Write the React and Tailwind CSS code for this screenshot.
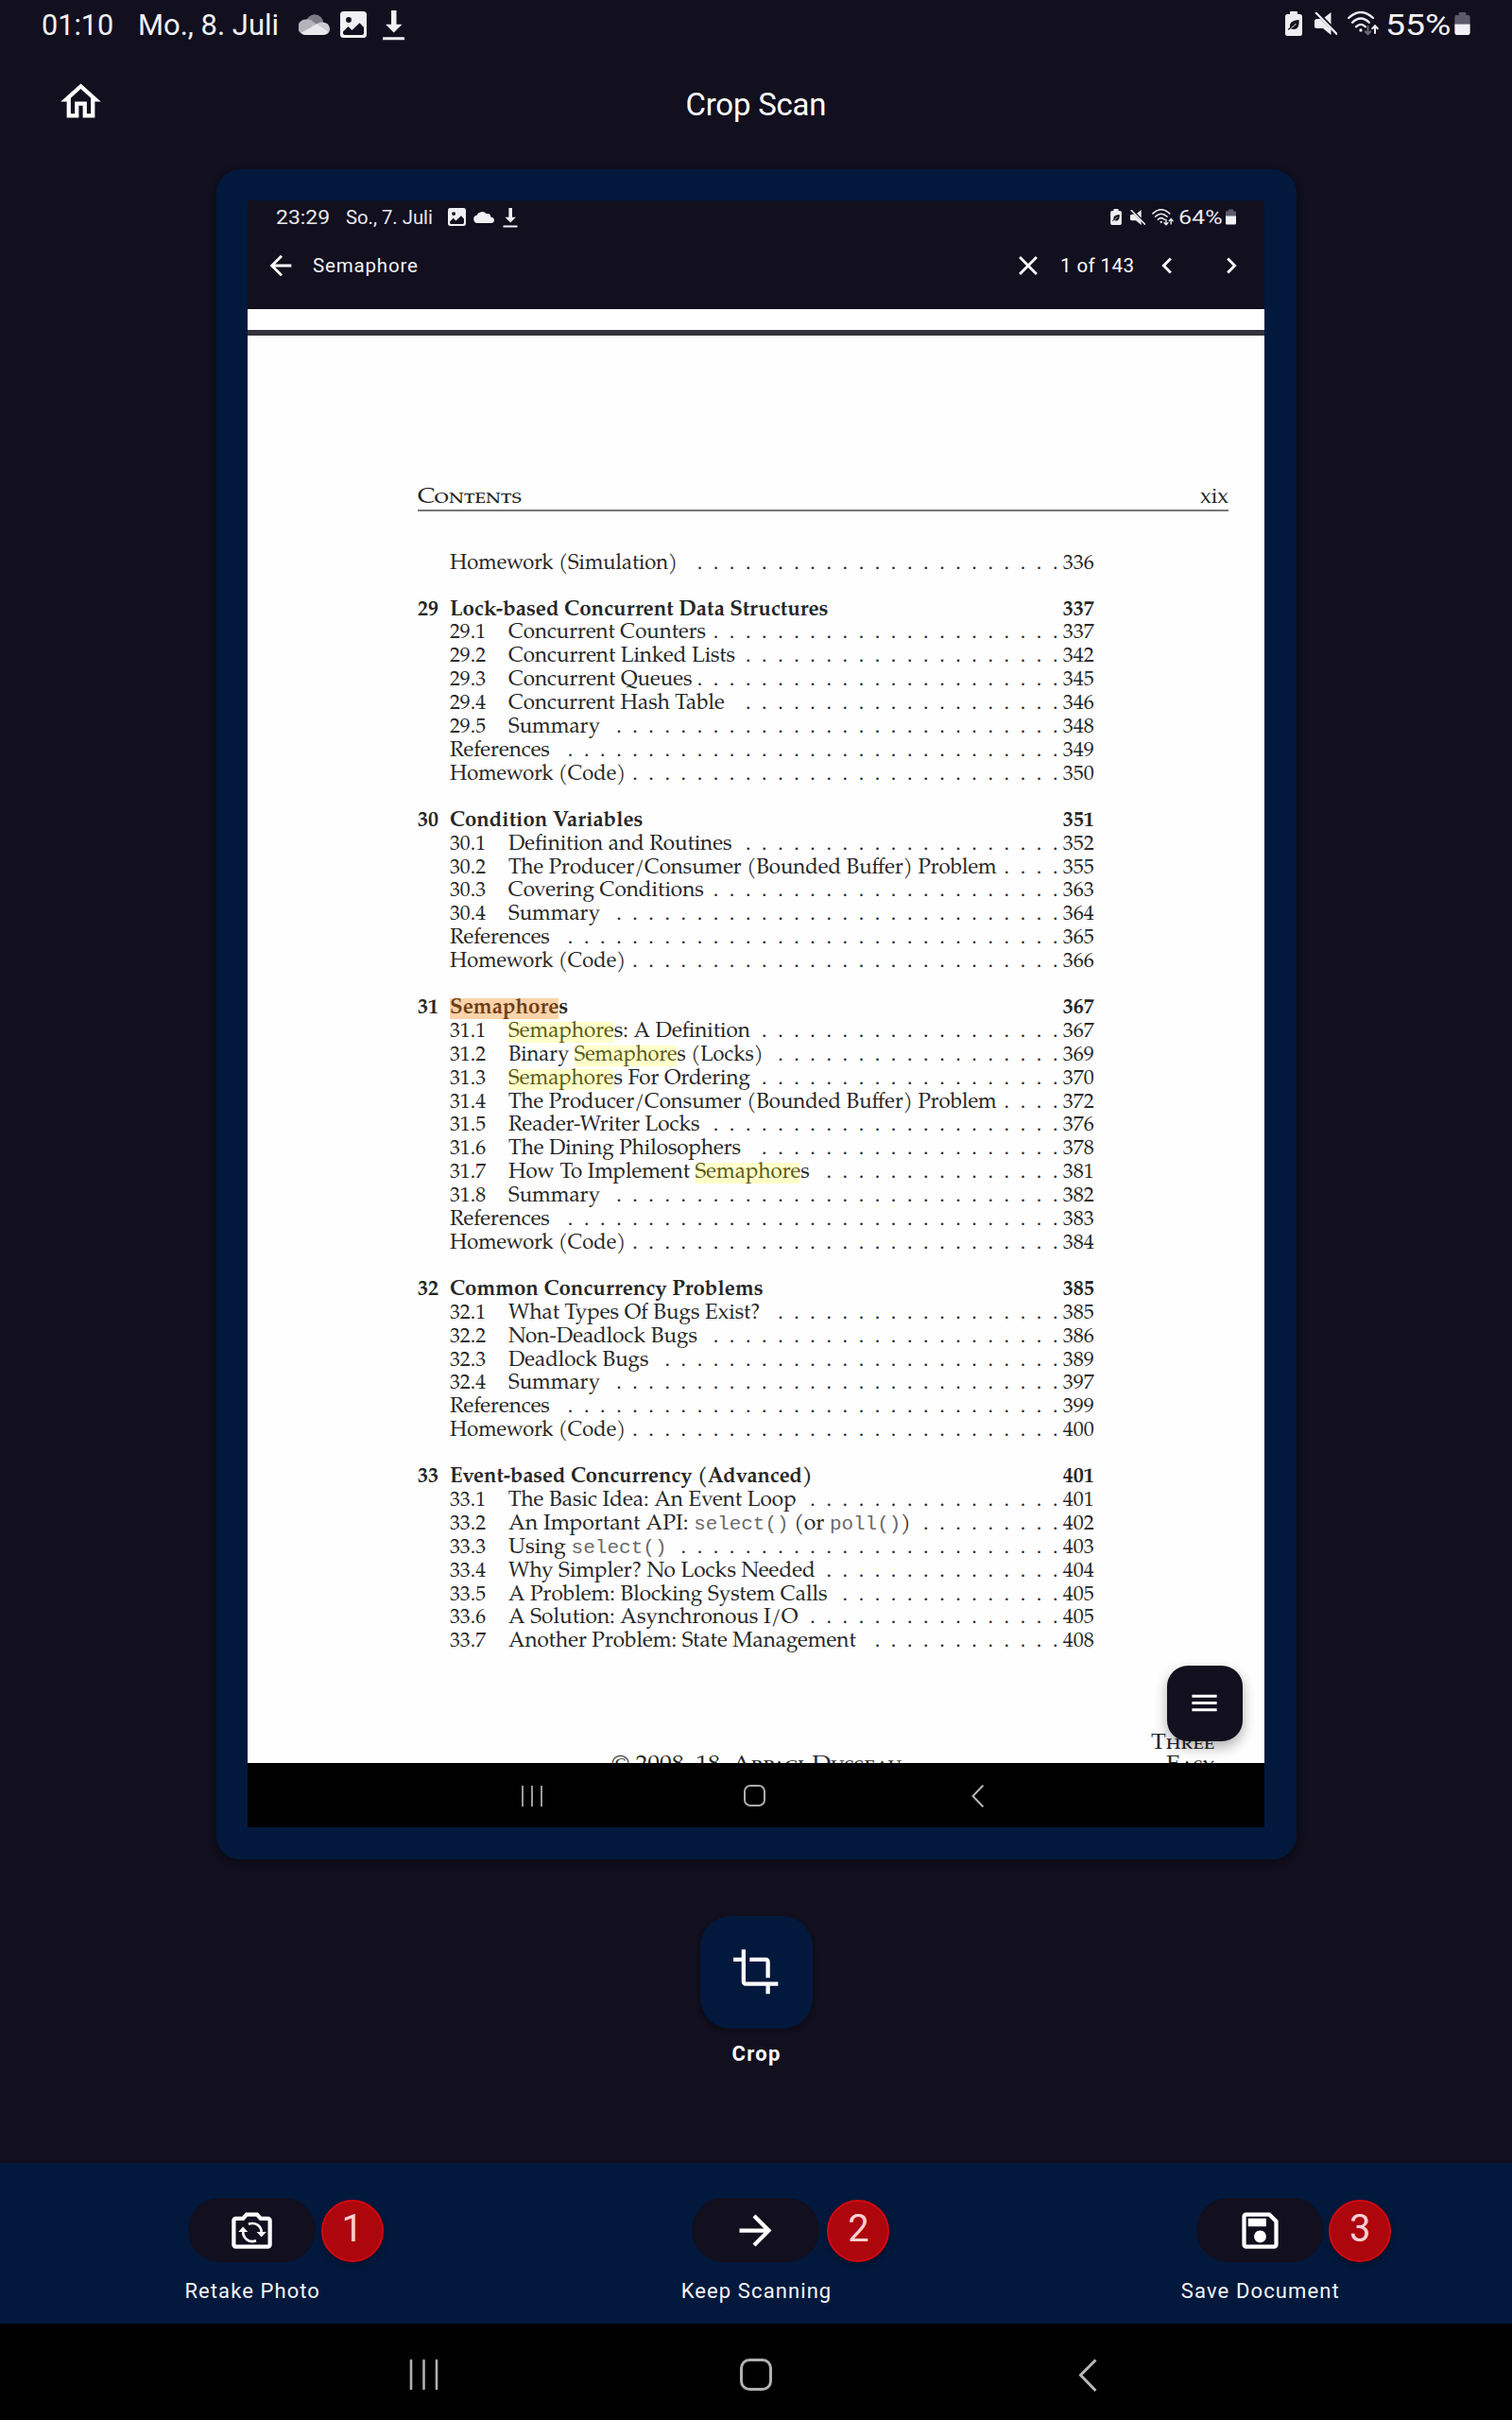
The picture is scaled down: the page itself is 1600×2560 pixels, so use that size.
import { useLayoutEffect, useRef, useState } from "react";

/* Stretches a run of text horizontally so that it takes exactly `w` pixels. */
function Fit({ w, children, className = "" }) {
  const ref = useRef(null);
  const [scale, setScale] = useState(1);
  useLayoutEffect(() => {
    setScale(w / ref.current.offsetWidth);
  }, [w]);
  return (
    <span className={"inline-block shrink-0 whitespace-nowrap " + className} style={{ width: w }}>
      <span ref={ref} className="inline-block origin-left" style={{ transform: `scaleX(${scale})` }}>
        {children}
      </span>
    </span>
  );
}

/* Spreads a plain string over `w` pixels by letter spacing alone. */
function Track({ w, children, className = "" }) {
  const ref = useRef(null);
  const [gap, setGap] = useState(0);
  useLayoutEffect(() => {
    const el = ref.current;
    const before = el.style.letterSpacing;
    el.style.letterSpacing = "0px";
    const natural = el.getBoundingClientRect().width;
    el.style.letterSpacing = before;
    setGap((w - natural) / (children.length - 1));
  }, [w, children]);
  return (
    <span className={"inline-block shrink-0 whitespace-nowrap " + className} style={{ width: w }}>
      <span ref={ref} className="inline-block" style={{ letterSpacing: gap + "px" }}>
        {children}
      </span>
    </span>
  );
}

function EcoBattery({ className }) {
  return (
    <svg viewBox="0 0 18 26" className={className}>
      <path fill="#eeeef2" d="M5 0.8Q5 0 5.8 0h6.4q.8 0 .8.8V3h2.5Q18 3 18 5.5v18q0 2.5-2.5 2.5h-13Q0 26 0 23.500v-18Q0 3 2.500 3H5z" />
      <path fill="#120f1e" d="M14.500 9c.6 5-.6 10-5.500 10-1.300 0-2.300-.3-3-.9l-2.400 1.700-.8-1 2.300-1.700C4.300 12 7.500 9.500 14.500 9z" />
      <path stroke="#eeeef2" strokeWidth="1" fill="none" d="M6.500 17.300q3-1.300 5-4.300" />
    </svg>
  );
}

function Mute({ className }) {
  return (
    <svg viewBox="0 0 24 24" className={className} fill="#eeeef2">
      <path d="M10.500 5.500 17.500 0v12.800z" />
      <path d="M0 9.500Q0 7 2.500 7h3.800L17.500 18.300V24L9 17H2.500Q0 17 0 14.500z" />
      <path d="M1.800.8 23.300 22.800" stroke="#eeeef2" strokeWidth="2.300" strokeLinecap="round" />
    </svg>
  );
}

function Wifi({ className, down }) {
  return (
    <svg viewBox="0 0 33 26" className={className} fill="none" stroke="#eeeef2" strokeWidth="2.300" strokeLinecap="round">
      <path d="M1.200 7Q14-5 27 7" />
      <path d="M5 11.800Q14 3.300 23 11.800" />
      <path d="M9 16.300Q14 11.500 19 16.300" />
      <circle cx="14" cy="20" r="1.700" fill="#eeeef2" stroke="none" />
      <path stroke={down} strokeWidth="2" d="M21.500 16v8M18.700 21.200l2.800 3 2.800-3" />
      <path strokeWidth="2" d="M29 23v-7.500M26.200 18.300l2.800-3 2.800 3" />
    </svg>
  );
}

function Battery({ className, level }) {
  return (
    <svg viewBox="0 0 17 25" className={className}>
      <path fill="#5d5b69" d="M4.500.8Q4.500 0 5.300 0h6.400q.8 0 .8.8V3H15q2 0 2 2.200V13H0V5.200Q0 3 2 3h2.500z" />
      <path fill="#f2f2f6" d={`M0 ${level}H17V22.500Q17 25 15 25H2Q0 25 0 22.500z`} />
    </svg>
  );
}

function Picture({ className }) {
  return (
    <svg viewBox="0 0 28 28" className={className}>
      <rect width="28" height="28" rx="3.500" fill="#f0f0f3" />
      <circle cx="9" cy="9" r="2.900" fill="#120f1e" />
      <path fill="#120f1e" d="M3 21.500 8.500 16l4 4L20.500 12.300l4.500 4.700v6q0 2-2 2H5q-2 0-2-2z" />
    </svg>
  );
}

function Download({ className }) {
  return (
    <svg viewBox="0 0 23 32" className={className} fill="#f0f0f3">
      <path d="M9 0h5.500v14.800h6L11.700 23.500 3 14.800h6z" />
      <rect y="28.300" width="23" height="3" rx=".6" />
    </svg>
  );
}

function CloudLayers({ className }) {
  return (
    <svg viewBox="0 0 33 22" className={className}>
      <circle cx="17" cy="9.500" r="9.300" fill="#7d7b86" />
      <path fill="#b5b4bb" d="M6.500 22A7.800 8 0 0 1 8 5.600Q12 4.200 16 8.500L23 13 10 22z" />
      <path fill="#cbcad0" d="M14 12.500 23 8.500Q32 7.500 33 15.500 33 19 30 21z" />
      <path fill="#e9e9ec" d="M3 19.500 19.500 10.500 31 18.500Q30 22 26 22H7.500Q4.500 22 3 19.500z" />
    </svg>
  );
}

function Cloud({ className }) {
  return (
    <svg viewBox="0 0 22 13" className={className} fill="#f0f0f3">
      <path d="M4.500 13A4.200 4.200 0 0 1 3.500 4.700 6 5.500 0 0 1 13.800 3.200Q18 2.500 18.300 6.500 22 7.200 22 10 21.800 13 18.500 13z" />
    </svg>
  );
}

function Glyph({ d, className }) {
  return (
    <svg viewBox="0 0 24 24" className={className} fill="#fff">
      <path d={d} />
    </svg>
  );
}

const HOME = "M12 5.69l5 4.500V18h-2v-6H9v6H7v-7.810l5-4.500M12 3L2 12h3v8h6v-6h2v6h6v-8h3L12 3z";
const BACK = "M20 11H7.830l5.590-5.590L12 4l-8 8 8 8 1.410-1.410L7.830 13H20v-2z";
const FORWARD = "M12 4l-1.410 1.410L16.170 11H4v2h12.170l-5.580 5.590L12 20l8-8z";
const CLOSE = "M19 6.410L17.590 5 12 10.590 6.410 5 5 6.410 10.590 12 5 17.590 6.410 19 12 13.410 17.590 19 19 17.590 13.410 12z";
const LEFT = "M15.410 7.410L14 6l-6 6 6 6 1.410-1.410L10.830 12z";
const RIGHT = "M10 6L8.590 7.410 13.170 12l-4.580 4.590L10 18l6-6z";
const MENU = "M3 18h18v-2H3v2zm0-5h18v-2H3v2zm0-7v2h18V6H3z";
const CROP = "M17 15h2V7c0-1.100-.9-2-2-2H9v2h8v8zM7 17V1H5v4H1v2h4v10c0 1.100.9 2 2 2h10v4h2v-4h4v-2H7z";
const SAVE = "M17 3H5c-1.110 0-2 .9-2 2v14c0 1.100.89 2 2 2h14c1.100 0 2-.9 2-2V7l-4-4zm2 16H5V5h11.170L19 7.830V19zm-7-7c-1.660 0-3 1.340-3 3s1.340 3 3 3 3-1.340 3-3-1.340-3-3-3zM6 6h9v4H6z";

function CameraSwitch({ className }) {
  return (
    <svg viewBox="0 0 24 24" className={className} fill="#fff">
      <path d="M20 5h-3.170L15 3H9L7.170 5H4c-1.100 0-2 .9-2 2v12c0 1.100.9 2 2 2h16c1.100 0 2-.9 2-2V7c0-1.100-.9-2-2-2zm0 14H4V7h4.050l1.830-2h4.240l1.830 2H20v12z" />
      <path d="M10.300 8.850C13.800 7.600 16.800 9.800 16.800 13M7.600 12.500c0 3.600 3.200 5.900 6.500 4.600" fill="none" stroke="#fff" strokeWidth="1.250" />
      <path d="M14.400 12.700h4.800l-2.400 2.600zM5.300 12.700H10l-2.400-2.600z" />
    </svg>
  );
}

function Code({ children }) {
  return <span className="font-['Liberation_Mono',monospace] text-[20.500px] text-[#6a6a6a]">{children}</span>;
}

const mark = "bg-[#feffc9] text-[#5b5b1d]";
const S = <span className={mark}>Semaphore</span>;

/* number, title, title width, leader dots, page */
const toc = [
  [null, "Homework (Simulation)", 241, 23, 336],
  ["29", "Lock-based Concurrent Data Structures", 401, 0, 337],
  ["29.1", "Concurrent Counters", 209, 22, 337],
  ["29.2", "Concurrent Linked Lists", 240.5, 20, 342],
  ["29.3", "Concurrent Queues", 194, 23, 345],
  ["29.4", "Concurrent Hash Table", 229, 20, 346],
  ["29.5", "Summary", 97, 28, 348],
  [null, "References", 105.5, 31, 349],
  [null, "Homework (Code)", 186, 27, 350],
  ["30", "Condition Variables", 204.5, 0, 351],
  ["30.1", "Definition and Routines", 236, 20, 352],
  ["30.2", "The Producer/Consumer (Bounded Buffer) Problem", 517, 4, 355],
  ["30.3", "Covering Conditions", 207, 22, 363],
  ["30.4", "Summary", 97, 28, 364],
  [null, "References", 105.5, 31, 365],
  [null, "Homework (Code)", 186, 27, 366],
  ["31", <><span className="bg-[#fdd3ab] text-[#703f14]">Semaphore</span>s</>, 125, 0, 367],
  ["31.1", <>{S}s: A Definition</>, 256, 19, 367],
  ["31.2", <>Binary {S}s (Locks)</>, 269.5, 18, 369],
  ["31.3", <>{S}s For Ordering</>, 256, 19, 370],
  ["31.4", "The Producer/Consumer (Bounded Buffer) Problem", 517, 4, 372],
  ["31.5", "Reader-Writer Locks", 203, 22, 376],
  ["31.6", "The Dining Philosophers", 246.5, 19, 378],
  ["31.7", <>How To Implement {S}s</>, 319, 15, 381],
  ["31.8", "Summary", 97, 28, 382],
  [null, "References", 105.5, 31, 383],
  [null, "Homework (Code)", 186, 27, 384],
  ["32", "Common Concurrency Problems", 332, 0, 385],
  ["32.1", "What Types Of Bugs Exist?", 266, 18, 385],
  ["32.2", "Non-Deadlock Bugs", 199.5, 22, 386],
  ["32.3", "Deadlock Bugs", 149, 25, 389],
  ["32.4", "Summary", 97, 28, 397],
  [null, "References", 105.5, 31, 399],
  [null, "Homework (Code)", 186, 27, 400],
  ["33", "Event-based Concurrency (Advanced)", 384, 0, 401],
  ["33.1", "The Basic Idea: An Event Loop", 305, 16, 401],
  ["33.2", <>An Important API: <Code>select()</Code> (or <Code>poll()</Code>)</>, 426, 9, 402],
  ["33.3", <>Using <Code>select()</Code></>, 167.5, 24, 403],
  ["33.4", "Why Simpler? No Locks Needed", 325, 15, 404],
  ["33.5", "A Problem: Blocking System Calls", 338, 14, 405],
  ["33.6", "A Solution: Asynchronous I/O", 306.5, 16, 405],
  ["33.7", "Another Problem: State Management", 368, 12, 408],
];

function TocRow({ row }) {
  const [num, title, width, dots, page] = row;
  const chapter = dots === 0;
  const section = num && !chapter;
  return (
    <div className={"flex h-[24.95px] items-baseline leading-[24.95px] " + (chapter ? "mt-[23.6px] font-bold" : "")}>
      <span className="w-[33.700px] shrink-0">{chapter ? num : ""}</span>
      {section && (
        <span className="w-[62px] shrink-0">
          <Fit w={38.5}>{num}</Fit>
        </span>
      )}
      <Fit w={width} className="text-[22.500px]">{title}</Fit>
      <span className="flex flex-1 justify-end whitespace-nowrap">
        <span className="tracking-[11.600px]">{".".repeat(Math.max(dots - 1, 0))}</span>
        <span>{dots > 0 ? "." : ""}</span>
      </span>
      <span className="w-[38.300px] shrink-0 text-right">{page}</span>
    </div>
  );
}

function Screenshot() {
  return (
    <div className="flex h-[1721px] w-[1076px] flex-col overflow-hidden bg-[#120f1e]">
      <div className="flex h-[32px] shrink-0 items-start pl-[29.500px] text-[20.500px] leading-[36px] text-[#e9e9ef]">
        <Fit w={57}>23:29</Fit>
        <Fit w={92} className="ml-[17px]">So., 7. Juli</Fit>
        <Picture className="mt-[8px] ml-[16.500px] h-[19px] w-[19px]" />
        <Cloud className="mt-[10.500px] ml-[8px] h-[13px] w-[22px]" />
        <Download className="mt-[7.500px] ml-[9px] h-[21px] w-[16px]" />
        <div className="flex-1" />
        <EcoBattery className="mt-[9px] h-[17px] w-[12px]" />
        <Mute className="mt-[9.500px] ml-[9px] h-[16px] w-[16px]" />
        <Wifi className="mt-[9px] ml-[7px] h-[18px] w-[23px]" down="#eeeef2" />
        <Fit w={46.5} className="ml-[4.500px]">64%</Fit>
        <Battery className="mt-[9px] mr-[30px] ml-[4px] h-[17px] w-[11px]" level={11} />
      </div>
      <div className="flex h-[83px] shrink-0 items-start pt-[20px] pl-[17.500px] text-[20.500px] leading-[35px] text-white">
        <Glyph d={BACK} className="h-[34px] w-[34px]" />
        <Track w={111} className="ml-[17.500px] text-[#f3f3f6]">Semaphore</Track>
        <div className="flex-1" />
        <Glyph d={CLOSE} className="h-[34px] w-[34px]" />
        <Track w={78} className="ml-[17.500px]">1 of 143</Track>
        <Glyph d={LEFT} className="ml-[17.500px] h-[34px] w-[34px]" />
        <Glyph d={RIGHT} className="mr-[18.500px] ml-[34px] h-[34px] w-[34px]" />
      </div>
      <div className="h-[22px] shrink-0 bg-white" />
      <div className="h-[6px] shrink-0 bg-[#33313a]" />
      <div className="relative flex h-[1509.500px] shrink-0 flex-col overflow-hidden bg-[#fefefe] pt-[155.500px] pl-[180px] font-['Palatino_Linotype','TeX_Gyre_Pagella','Liberation_Serif',serif] text-[22px] text-[#262626]">
        <div className="flex h-[30px] w-[858px] justify-between border-b-2 border-[#77777a] leading-[32px]">
          <Fit w={110} className="text-[23px] [font-variant:small-caps]">Contents</Fit>
          <Fit w={30}>xix</Fit>
        </div>
        <div className="mt-[44.500px] w-[715.700px]">
          {toc.map((row, i) => (
            <TocRow key={i} row={row} />
          ))}
        </div>
        <div className="mt-[81.500px] flex h-[80px] w-[843px] justify-between leading-[25px] [font-variant:small-caps]">
          <Fit w={307} className="mt-[23px] ml-[205px] text-[23px]">© 2008–18, Arpaci-Dusseau</Fit>
          <div className="flex flex-col items-end text-[23px]">
            <Fit w={67}>Three</Fit>
            <Fit w={51} className="-mt-[1.500px]">Easy</Fit>
          </div>
        </div>
        <div className="absolute top-[1406.500px] left-[972.500px] flex h-[80px] w-[80px] items-center justify-center rounded-[22px] bg-[#120f1e] shadow-[0_6px_14px_rgba(0,0,0,0.32)]">
          <Glyph d={MENU} className="h-[35px] w-[35px]" />
        </div>
      </div>
      <div className="flex flex-1 items-start bg-black pt-[23.500px] pl-[290px]">
        <svg viewBox="0 0 22 24" className="h-[24px] w-[22px]" stroke="#adadad" strokeWidth="1.800">
          <path d="M1 1v22M11 1v22M21 1v22" />
        </svg>
        <div className="ml-[213px] h-[23px] w-[23px] rounded-[7px] border-2 border-[#adadad]" />
        <svg viewBox="0 0 13 24" className="ml-[218px] h-[24px] w-[13px]" stroke="#b5b5b5" strokeWidth="2" fill="none">
          <path d="M12.300.7 1.500 12l10.800 11.300" />
        </svg>
      </div>
    </div>
  );
}

function Action({ icon, label, width, n, badge }) {
  return (
    <div className="flex flex-1 flex-col items-center pt-[37px]">
      <div className="relative flex h-[68px] w-[135px] items-center justify-center rounded-full bg-[#120f1e]">
        {icon}
        <div className={"absolute top-[2px] flex h-[66px] w-[66px] justify-center rounded-full border-2 border-[#d20911] bg-[#ad060d] text-[40px] leading-[58px] text-[#fbd0d3] shadow-[0_3px_6px_rgba(0,0,0,0.35)] " + badge}>
          {n}
        </div>
      </div>
      <Track w={width} className="mt-[17px] text-[22px] leading-[28px] text-[#f3f6fb]">{label}</Track>
    </div>
  );
}

export default function App() {
  return (
    <div className="flex h-[2560px] w-[1600px] flex-col overflow-hidden bg-[#120f1e] font-[Roboto,sans-serif] text-white">
      <div className="flex h-[52px] shrink-0 items-start pl-[44px] text-[32px] leading-[52px] text-[#f1f1f5]">
        <Fit w={76.5}>01:10</Fit>
        <Fit w={149} className="ml-[25px]">Mo., 8. Juli</Fit>
        <CloudLayers className="mt-[15px] ml-[21px] h-[22px] w-[33px]" />
        <Picture className="mt-[12px] ml-[11.500px] h-[28px] w-[28px]" />
        <Download className="mt-[10.500px] ml-[16.500px] h-[32px] w-[23px]" />
        <div className="flex-1" />
        <EcoBattery className="mt-[12px] h-[26px] w-[18px]" />
        <Mute className="mt-[13px] ml-[13px] h-[24px] w-[24px]" />
        <Wifi className="mt-[12px] ml-[11px] h-[26px] w-[33px]" down="#6b6975" />
        <Fit w={69} className="ml-[6.500px]">55%</Fit>
        <Battery className="mt-[13px] mr-[44px] ml-[4.500px] h-[24px] w-[17px]" level={13} />
      </div>
      <div className="flex h-[126.500px] shrink-0 items-start pt-[30px] pl-[59.500px]">
        <Glyph d={HOME} className="h-[51px] w-[51px]" />
        <Track w={149} className="ml-[615px] text-[33px] leading-[58px]">Crop Scan</Track>
      </div>
      <div className="mx-auto flex h-[1788.500px] w-[1143px] shrink-0 justify-center rounded-[25px] bg-[#02193d] pt-[33.500px] shadow-[0_3px_8px_rgba(0,0,0,0.4)]">
        <Screenshot />
      </div>
      <div className="flex h-[321px] shrink-0 flex-col items-center pt-[59.500px]">
        <div className="flex h-[119px] w-[119px] items-center justify-center rounded-[32px] bg-[#02193d] shadow-[0_2px_5px_rgba(0,0,0,0.35)]">
          <Glyph d={CROP} className="h-[51.500px] w-[51.500px]" />
        </div>
        <Track w={51} className="mt-[13.500px] text-[22px] leading-[27px] font-bold">Crop</Track>
      </div>
      <div className="flex h-[169.500px] shrink-0 bg-[#02193d]">
        <Action icon={<CameraSwitch className="h-[51px] w-[51px]" />} label="Retake Photo" width={142.5} n="1" badge="left-[140.500px]" />
        <Action icon={<Glyph d={FORWARD} className="h-[51px] w-[51px]" />} label="Keep Scanning" width={158.5} n="2" badge="left-[143px]" />
        <Action icon={<Glyph d={SAVE} className="h-[51px] w-[51px]" />} label="Save Document" width={167} n="3" badge="left-[140.500px]" />
      </div>
      <div className="flex flex-1 items-start bg-black pt-[37.500px] pl-[433px]">
        <svg viewBox="0 0 31 34" className="h-[34px] w-[31px]" stroke="#b0b0b0" strokeWidth="2.600" strokeLinecap="round">
          <path d="M2 2v30M15.500 2v30M29 2v30" />
        </svg>
        <div className="ml-[318.500px] h-[34px] w-[34px] rounded-[10px] border-[3px] border-[#b0b0b0]" />
        <svg viewBox="0 0 20 36" className="ml-[324px] h-[36px] w-[20px]" stroke="#b8b8b8" strokeWidth="3" fill="none">
          <path d="M18.500 1.500 2.500 17.500l16 16.500" />
        </svg>
      </div>
    </div>
  );
}
